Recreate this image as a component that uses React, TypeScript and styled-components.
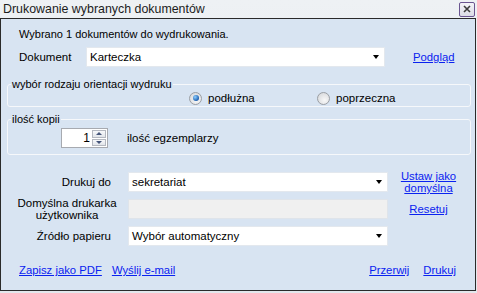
import React, { useState } from 'react'
import styled, { createGlobalStyle } from 'styled-components'

const GlobalStyle = createGlobalStyle`
  body {
    margin: 0;
    background: #e8ebef;
    font-family: "Liberation Sans", Arial, sans-serif;
    font-size: 11px;
    color: #000;
  }
`

const Window = styled.div`
  width: 477px;
  height: 293px;
  display: flex;
  flex-direction: column;
  background: linear-gradient(#eef1f4, #e3e7ec);
  overflow: hidden;
`

const TitleBar = styled.div`
  height: 18px;
  display: flex;
  align-items: center;
  justify-content: space-between;
  padding: 0 2px 0 3px;
  font-size: 12.4px;
  color: #1c1c1c;
`

const CloseButton = styled.div`
  width: 14px;
  height: 13px;
  border: 1px solid #6a5590;
  border-radius: 2px;
  background: linear-gradient(#f4f4f8, #dcdce6);
  display: flex;
  align-items: center;
  justify-content: center;
`

const Frame = styled.div`
  width: 476px;
  height: 273px;
  box-sizing: border-box;
  border: 1px solid #2a2a2a;
  background: #d8e4f2;
  padding: 0 4px 0 6px;
  display: flex;
  flex-direction: column;
`

const Info = styled.div`
  margin: 9px 0 0 12px;
  line-height: 13px;
`

const DocRow = styled.div`
  display: flex;
  align-items: center;
  height: 20px;
  margin: 6px 0 0 12px;
`

const DocLabel = styled.span`
  width: 67px;
  font-size: 11.5px;
`

const Combo = styled.div<{ $width: number }>`
  width: ${p => p.$width}px;
  height: 20px;
  box-sizing: border-box;
  background: #fff;
  border: 1px solid #e3e8ee;
  display: flex;
  align-items: center;
  justify-content: space-between;
  padding: 0 5px 0 3px;
  font-size: 11.5px;
  &::after {
    content: '';
    border-left: 3.5px solid transparent;
    border-right: 3.5px solid transparent;
    border-top: 4px solid #000;
  }
`

const Disabled = styled.div`
  width: 260px;
  height: 20px;
  box-sizing: border-box;
  background: #f0f0f0;
  border: 1px solid #dfe4ea;
`

const Link = styled.a<{ $ml?: number }>`
  color: #0a22f0;
  text-decoration: underline;
  margin-left: ${p => p.$ml ?? 0}px;
  cursor: pointer;
  line-height: 12px;
  font-size: 11.3px;
`

const Group = styled.fieldset<{ $mt: number }>`
  margin: ${p => p.$mt}px 0 0 0;
  padding: 0;
  border: 1px solid #f6f8fb;
  border-radius: 3px;
  min-width: 0;
  legend {
    margin-left: 3px;
    padding: 0 1px;
    line-height: 13px;
  }
`

const RadioRow = styled.div`
  display: flex;
  align-items: center;
  height: 14px;
  padding: 0 0 1px 181px;
`

const Option = styled.label<{ $width?: number }>`
  display: flex;
  align-items: center;
  gap: 6px;
  width: ${p => (p.$width ? `${p.$width}px` : 'auto')};
  font-size: 11.5px;
  cursor: pointer;
`

const RadioDot = styled.span<{ $on: boolean }>`
  width: 11px;
  height: 11px;
  border-radius: 50%;
  border: 1px solid #9a9ea4;
  background: radial-gradient(circle at 60% 65%, #f8f8f8, #d2d4d7);
  display: flex;
  align-items: center;
  justify-content: center;
  &::after {
    content: '';
    display: ${p => (p.$on ? 'block' : 'none')};
    width: 6px;
    height: 6px;
    border-radius: 50%;
    background: radial-gradient(circle at 35% 35%, #8fd0ff, #1d5fb0 70%, #123f80);
  }
`

const CopiesRow = styled.div`
  display: flex;
  align-items: center;
  margin: 2px 0 6px 53px;
  gap: 19px;
  font-size: 11.5px;
`

const Spinner = styled.div`
  width: 47px;
  height: 20px;
  box-sizing: border-box;
  border: 1px solid #a7aab0;
  background: #fff;
  display: flex;
  justify-content: flex-end;
  align-items: stretch;
  font-size: 12px;
`

const SpinValue = styled.span`
  align-self: center;
  padding-right: 2px;
`

const SpinButtons = styled.div`
  width: 14px;
  display: flex;
  flex-direction: column;
  gap: 1px;
  padding: 1px 1px 1px 0;
`

const SpinButton = styled.div<{ $up: boolean }>`
  flex: 1;
  border: 1px solid #b4b8c0;
  background: linear-gradient(#f7f8fa, #e2e5ea);
  display: flex;
  align-items: center;
  justify-content: center;
  &::after {
    content: '';
    border-left: 3px solid transparent;
    border-right: 3px solid transparent;
    ${p => (p.$up ? 'border-bottom: 3px solid #45557a;' : 'border-top: 3px solid #45557a;')}
  }
`

const PrinterGrid = styled.div`
  display: grid;
  grid-template-columns: 96px 260px 56px;
  grid-auto-rows: 20px;
  column-gap: 13px;
  row-gap: 7px;
  align-items: center;
  margin: 17px 0 0 12px;
`

const FieldLabel = styled.span<{ $center?: boolean }>`
  justify-self: ${p => (p.$center ? 'center' : 'end')};
  text-align: ${p => (p.$center ? 'center' : 'right')};
  padding-right: ${p => (p.$center ? 0 : 4)}px;
  white-space: nowrap;
  line-height: 12px;
  font-size: 11.5px;
`

const SideLink = styled(Link)`
  text-align: center;
  margin-left: -1px;
`

const Footer = styled.div`
  display: flex;
  align-items: center;
  margin: 18px 15px 0 12px;
  line-height: 13px;
`

const Spacer = styled.div`
  flex: 1;
`

export default function App() {
  const [orient, setOrient] = useState<'pion' | 'poziom'>('pion')
  return (
    <>
      <GlobalStyle />
      <Window>
        <TitleBar>
          <span>Drukowanie wybranych dokumentów</span>
          <CloseButton>
            <svg width="8" height="8" viewBox="0 0 8 8">
              <path d="M1 1 L7 7 M7 1 L1 7" stroke="#3c3c3c" strokeWidth="1.6" />
            </svg>
          </CloseButton>
        </TitleBar>
        <Frame>
          <Info>Wybrano 1 dokumentów do wydrukowania.</Info>
          <DocRow>
            <DocLabel>Dokument</DocLabel>
            <Combo $width={299}>Karteczka</Combo>
            <Link $ml={28}>Podgląd</Link>
          </DocRow>
          <Group $mt={11}>
            <legend>wybór rodzaju orientacji wydruku</legend>
            <RadioRow>
              <Option $width={128} onClick={() => setOrient('pion')}>
                <RadioDot $on={orient === 'pion'} />
                podłużna
              </Option>
              <Option onClick={() => setOrient('poziom')}>
                <RadioDot $on={orient === 'poziom'} />
                poprzeczna
              </Option>
            </RadioRow>
          </Group>
          <Group $mt={6}>
            <legend>ilość kopii</legend>
            <CopiesRow>
              <Spinner>
                <SpinValue>1</SpinValue>
                <SpinButtons>
                  <SpinButton $up />
                  <SpinButton $up={false} />
                </SpinButtons>
              </Spinner>
              <span>ilość egzemplarzy</span>
            </CopiesRow>
          </Group>
          <PrinterGrid>
            <FieldLabel>Drukuj do</FieldLabel>
            <Combo $width={260}>sekretariat</Combo>
            <SideLink>Ustaw jako domyślna</SideLink>
            <FieldLabel $center>
              Domyślna drukarka
              <br />
              użytkownika
            </FieldLabel>
            <Disabled />
            <SideLink>Resetuj</SideLink>
            <FieldLabel>Źródło papieru</FieldLabel>
            <Combo $width={260}>Wybór automatyczny</Combo>
            <span />
          </PrinterGrid>
          <Footer>
            <Link>Zapisz jako PDF</Link>
            <Link $ml={10}>Wyślij e-mail</Link>
            <Spacer />
            <Link>Przerwij</Link>
            <Link $ml={14}>Drukuj</Link>
          </Footer>
        </Frame>
      </Window>
    </>
  )
}
